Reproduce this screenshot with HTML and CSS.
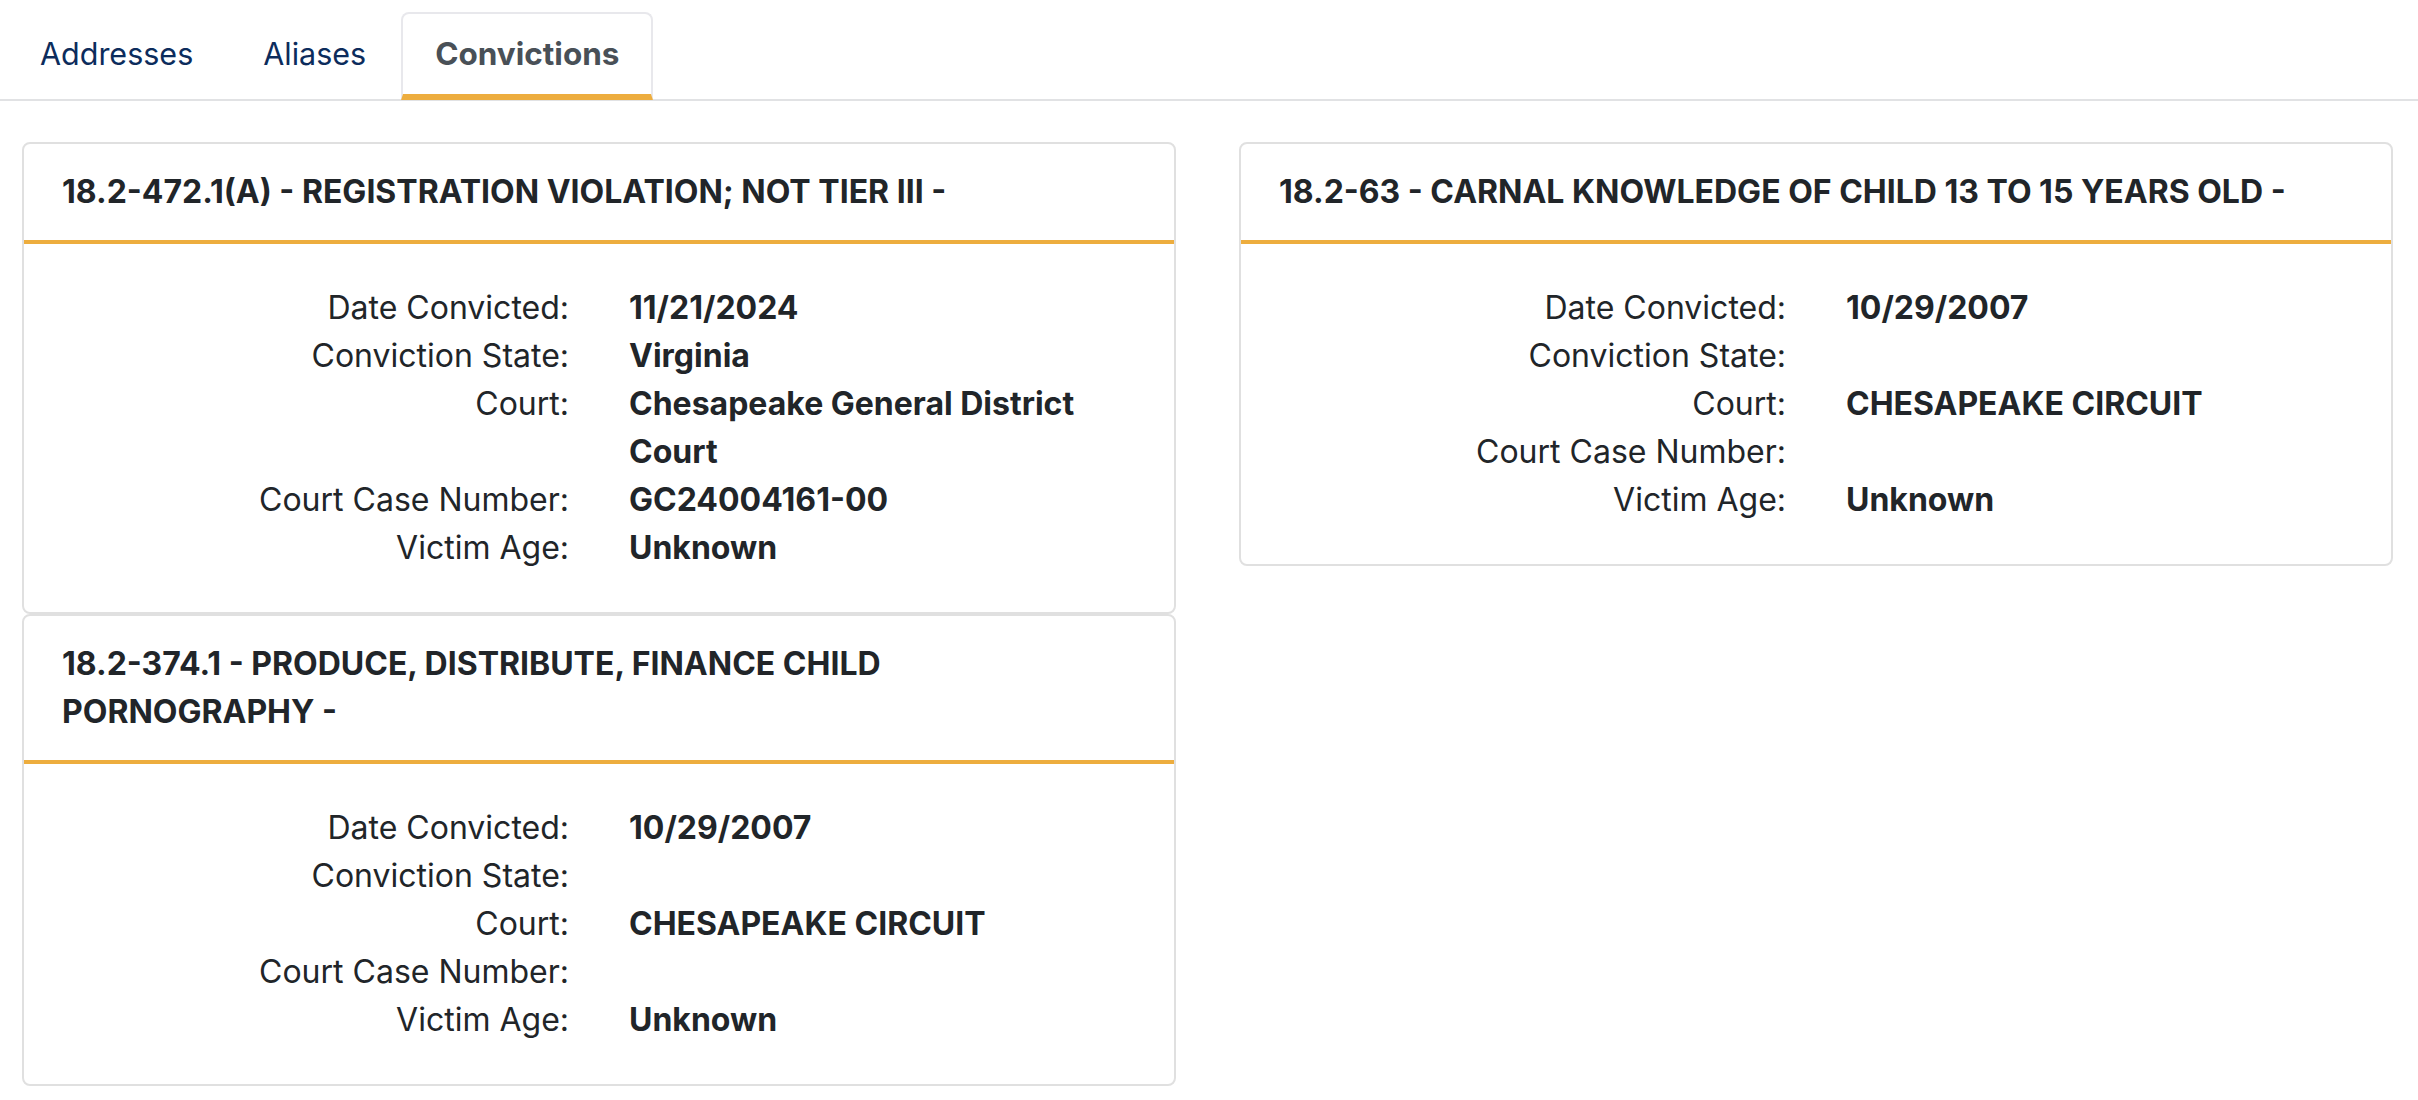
FILE: index.html
```html
<!DOCTYPE html>
<html lang="en">
<head>
<meta charset="utf-8">
<title>Convictions</title>
<link rel="stylesheet" href="styles.css">
</head>
<body>
<nav class="tabs">
  <a class="tab">Addresses</a>
  <a class="tab">Aliases</a>
  <a class="tab active">Convictions</a>
</nav>
<main class="grid">
  <div class="col">
    <section class="card">
      <h3 class="card-header">18.2-472.1(A) - REGISTRATION VIOLATION; NOT TIER III -</h3>
      <div class="card-body">
        <div class="row"><div class="label">Date Convicted:</div><div class="value">11/21/2024</div></div>
        <div class="row"><div class="label">Conviction State:</div><div class="value">Virginia</div></div>
        <div class="row"><div class="label">Court:</div><div class="value">Chesapeake General District Court</div></div>
        <div class="row"><div class="label">Court Case Number:</div><div class="value">GC24004161-00</div></div>
        <div class="row"><div class="label">Victim Age:</div><div class="value">Unknown</div></div>
      </div>
    </section>
    <section class="card">
      <h3 class="card-header">18.2-374.1 - PRODUCE, DISTRIBUTE, FINANCE CHILD PORNOGRAPHY -</h3>
      <div class="card-body">
        <div class="row"><div class="label">Date Convicted:</div><div class="value">10/29/2007</div></div>
        <div class="row"><div class="label">Conviction State:</div><div class="value"></div></div>
        <div class="row"><div class="label">Court:</div><div class="value">CHESAPEAKE CIRCUIT</div></div>
        <div class="row"><div class="label">Court Case Number:</div><div class="value"></div></div>
        <div class="row"><div class="label">Victim Age:</div><div class="value">Unknown</div></div>
      </div>
    </section>
  </div>
  <div class="col">
    <section class="card">
      <h3 class="card-header">18.2-63 - CARNAL KNOWLEDGE OF CHILD 13 TO 15 YEARS OLD -</h3>
      <div class="card-body">
        <div class="row"><div class="label">Date Convicted:</div><div class="value">10/29/2007</div></div>
        <div class="row"><div class="label">Conviction State:</div><div class="value"></div></div>
        <div class="row"><div class="label">Court:</div><div class="value">CHESAPEAKE CIRCUIT</div></div>
        <div class="row"><div class="label">Court Case Number:</div><div class="value"></div></div>
        <div class="row"><div class="label">Victim Age:</div><div class="value">Unknown</div></div>
      </div>
    </section>
  </div>
</main>
</body>
</html>
```
FILE: styles.css
```css
html, body {
  margin: 0;
  padding: 0;
  background: #ffffff;
}
body {
  font-family: Inter, "Liberation Sans", sans-serif;
  font-size: 32px;
  line-height: 48px;
  color: #212529;
}
.tabs {
  display: flex;
  padding: 12px 0 0 5px;
  border-bottom: 2px solid #e1e2e4;
}
.tab {
  display: block;
  padding: 16px 33px;
  border: 2px solid transparent;
  border-bottom: 6px solid transparent;
  border-radius: 8px 8px 0 0;
  margin-bottom: -1px;
  font-size: 30.5px;
  color: #0c2c5c;
  text-decoration: none;
}
.tab.active {
  color: #495057;
  font-size: 31.5px;
  font-weight: 700;
  padding: 16px 32px;
  border-color: #e8e8ec #e8e8ec #edad3e;
  background: #fff;
}
.grid {
  display: flex;
  gap: 63px;
  padding: 41px 0 0 22px;
  align-items: flex-start;
}
.col {
  width: 1154px;
  display: flex;
  flex-direction: column;
}
.card {
  border: 2px solid #e0e0e0;
  border-radius: 8px;
  background: #fff;
}
.card-header {
  margin: 0;
  padding: 24px 38px;
  font-size: 32px;
  line-height: 48px;
  font-weight: 700;
  border-bottom: 4px solid #edad3e;
}
.card-body {
  padding: 40px;
}
.row {
  display: grid;
  grid-template-columns: 1fr 1fr;
  margin: 0 -30px;
}
.label {
  padding: 0 30px;
  text-align: right;
}
.value {
  padding: 0 30px;
  font-weight: 700;
}
```
